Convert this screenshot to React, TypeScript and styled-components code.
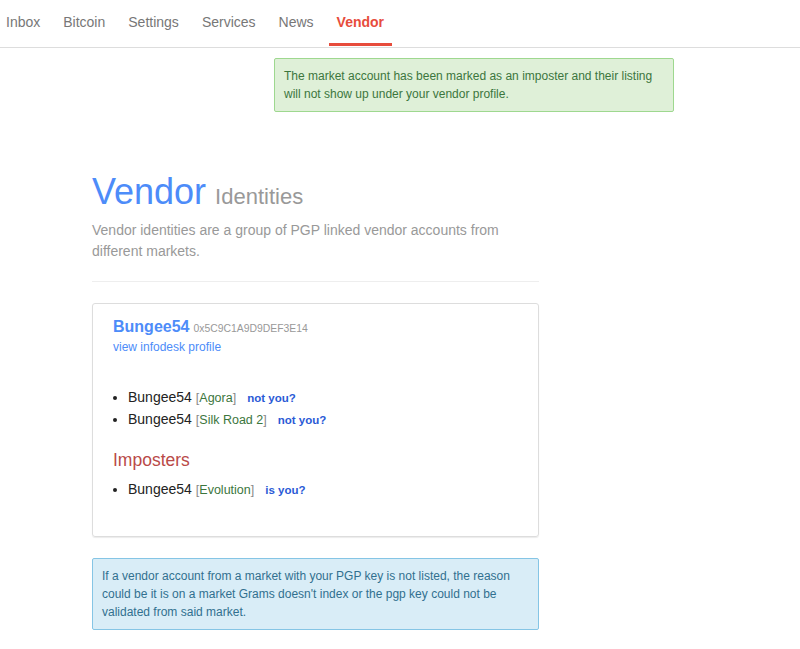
import React from "react";
import styled, { createGlobalStyle } from "styled-components";

const Global = createGlobalStyle`
  html, body { margin: 0; padding: 0; background: #fff; }
  body { font-family: "Liberation Sans", Arial, sans-serif; color: #333; }
  * { box-sizing: border-box; }
`;

const Nav = styled.nav`
  display: flex;
  height: 48px;
  border-bottom: 1px solid #ddd;
  padding-left: 0;
  margin-left: -2px;
  gap: 7px;
`;

const Tab = styled.a<{ $active?: boolean }>`
  display: flex;
  align-items: center;
  padding: 0 8px;
  font-size: 14px;
  color: ${(p) => (p.$active ? "#e74c3c" : "#777")};
  font-weight: ${(p) => (p.$active ? "bold" : "normal")};
  border-bottom: 3px solid ${(p) => (p.$active ? "#e74c3c" : "transparent")};
  margin-bottom: 1px;
  text-decoration: none;
`;

const Notice = styled.div`
  margin: 10px 0 0 274px;
  width: 400px;
  padding: 8px 9px;
  background: #dff0d8;
  border: 1px solid #9ed88f;
  border-radius: 2px;
  color: #3c763d;
  font-size: 12px;
  line-height: 18px;
`;

const Main = styled.main`
  margin: 0 0 0 92px;
  width: 447px;
  padding-top: 58px;
`;

const Title = styled.h1`
  margin: 0;
  font-weight: normal;
  font-size: 36px;
  line-height: 44px;
  color: #4d8cf9;
  display: flex;
  align-items: baseline;
  gap: 9px;
`;

const Sub = styled.small`
  font-size: 22px;
  color: #999;
`;

const Lead = styled.p`
  margin: 1px 0 0;
  font-size: 14px;
  line-height: 21px;
  color: #999;
`;

const Rule = styled.hr`
  margin: 19px 0 21px;
  border: 0;
  border-top: 1px solid #eee;
`;

const Panel = styled.section`
  border: 1px solid #ddd;
  border-radius: 3px;
  box-shadow: 0 1px 1px rgba(0, 0, 0, 0.08);
  padding: 14px 20px 35px;
`;

const NameRow = styled.div`
  display: flex;
  align-items: baseline;
  gap: 4px;
`;

const Name = styled.a`
  font-size: 16px;
  font-weight: bold;
  color: #4d8cf9;
  text-decoration: none;
`;

const KeyId = styled.span`
  font-size: 10.4px;
  color: #999;
`;

const ProfileLink = styled.a`
  display: block;
  font-size: 12px;
  line-height: 17px;
  color: #4d8cf9;
  text-decoration: none;
  margin-top: 3px;
`;

const List = styled.ul`
  margin: 0;
  padding-left: 15px;
  list-style: disc;
  li { font-size: 14px; line-height: 21px; color: #222; }
`;

const Accounts = styled(List)`
  margin-top: 31px;
`;

const Market = styled.span`
  font-size: 12.5px;
  color: #888;
  margin-left: 4px;
  span { color: #3c763d; }
`;

const Claim = styled.a`
  font-size: 11.5px;
  font-weight: bold;
  color: #2a5ad6;
  margin-left: 11px;
  text-decoration: none;
`;

const Imposters = styled.h3`
  margin: 18px 0 8px;
  font-size: 17.5px;
  font-weight: normal;
  line-height: 22px;
  color: #b94a48;
`;

const Info = styled.div`
  margin-top: 21px;
  padding: 8px 9px;
  background: #d9edf7;
  border: 1px solid #85c5e5;
  border-radius: 2px;
  color: #31708f;
  font-size: 12px;
  line-height: 18px;
`;

const tabs = ["Inbox", "Bitcoin", "Settings", "Services", "News", "Vendor"];

const Account = ({ market, claim }: { market: string; claim: string }) => (
  <li>
    Bungee54
    <Market>
      [<span>{market}</span>]
    </Market>
    <Claim href="#">{claim}</Claim>
  </li>
);

export default function App() {
  return (
    <>
      <Global />
      <Nav>
        {tabs.map((t) => (
          <Tab key={t} href="#" $active={t === "Vendor"}>
            {t}
          </Tab>
        ))}
      </Nav>
      <Notice>
        The market account has been marked as an imposter and their listing
        will not show up under your vendor profile.
      </Notice>
      <Main>
        <Title>
          Vendor <Sub>Identities</Sub>
        </Title>
        <Lead>
          Vendor identities are a group of PGP linked vendor accounts from
          different markets.
        </Lead>
        <Rule />
        <Panel>
          <NameRow>
            <Name href="#">Bungee54</Name>
            <KeyId>0x5C9C1A9D9DEF3E14</KeyId>
          </NameRow>
          <ProfileLink href="#">view infodesk profile</ProfileLink>
          <Accounts>
            <Account market="Agora" claim="not you?" />
            <Account market="Silk Road 2" claim="not you?" />
          </Accounts>
          <Imposters>Imposters</Imposters>
          <List>
            <Account market="Evolution" claim="is you?" />
          </List>
        </Panel>
        <Info>
          If a vendor account from a market with your PGP key is not listed,
          the reason could be it is on a market Grams doesn't index or the pgp
          key could not be validated from said market.
        </Info>
      </Main>
    </>
  );
}
